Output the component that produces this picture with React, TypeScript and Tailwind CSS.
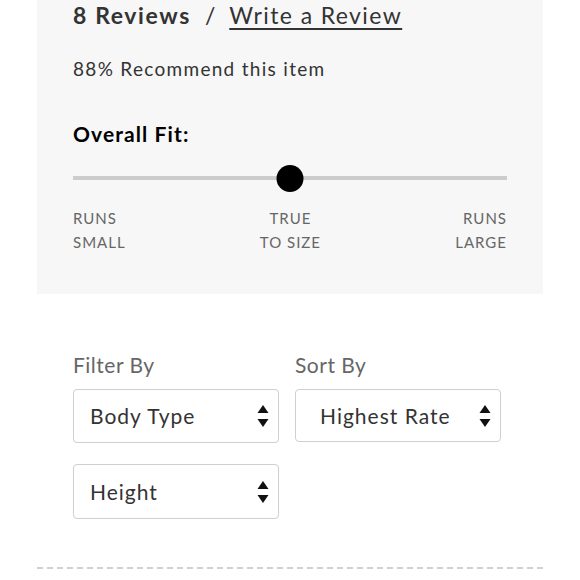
import React from "react";

function Arrows() {
  return (
    <svg width="12" height="24" viewBox="0 0 12 24" className="shrink-0">
      <path d="M6 1 L11.5 9 L0.5 9 Z" fill="#111" />
      <path d="M6 23 L11.5 15 L0.5 15 Z" fill="#111" />
    </svg>
  );
}

function Select({ label, pl, h }: { label: string; pl: string; h: string }) {
  return (
    <div className={`w-[206px] ${h} border border-[#cfcfcf] rounded-[4px] bg-white flex items-center justify-between ${pl} pr-[9px]`}>
      <span className="text-[21px] text-[#333] tracking-[1px]">{label}</span>
      <Arrows />
    </div>
  );
}

export default function App() {
  return (
    <div className="w-[580px] h-[580px] bg-white overflow-hidden font-['Lato',sans-serif]">
      <div className="mx-[37px] bg-[#f7f7f7] h-[294px] px-[36px]">
        <div className="flex items-baseline text-[23px] text-[#333] h-[30px] leading-[30px]">
          <span className="font-bold tracking-[1.6px]">8 Reviews</span>
          <span className="mx-[14px]">/</span>
          <span className="underline underline-offset-[4px] decoration-[1.5px] tracking-[1.4px]">Write a Review</span>
        </div>
        <div className="mt-[26px] text-[19px] text-[#333] leading-[26px] tracking-[1.3px]">88% Recommend this item</div>
        <div className="mt-[39px] text-[21px] font-bold text-black leading-[26px] tracking-[1.1px]">Overall Fit:</div>
        <div className="relative mt-[18px] h-[26px] flex items-center">
          <div className="w-full h-[4px] bg-[#cccccc]" />
          <div className="absolute left-1/2 top-0 -translate-x-1/2 w-[27px] h-[27px] rounded-full bg-black" />
        </div>
        <div className="mt-[15px] flex justify-between text-[15px] text-[#666] leading-[24px] tracking-[1px]">
          <div className="text-left">RUNS<br />SMALL</div>
          <div className="text-center">TRUE<br />TO SIZE</div>
          <div className="text-right">RUNS<br />LARGE</div>
        </div>
      </div>
      <div className="px-[73px] pt-[57px]">
        <div className="flex gap-[16px]">
          <div className="flex flex-col">
            <div className="text-[21px] text-[#666] leading-[28px] tracking-[0.5px]">Filter By</div>
            <div className="mt-[10px]">
              <Select label="Body Type" pl="pl-[16px]" h="h-[54px]" />
            </div>
            <div className="mt-[21px]">
              <Select label="Height" pl="pl-[16px]" h="h-[55px]" />
            </div>
          </div>
          <div className="flex flex-col">
            <div className="text-[21px] text-[#666] leading-[28px] tracking-[0.5px]">Sort By</div>
            <div className="mt-[10px]">
              <Select label="Highest Rate" pl="pl-[24px]" h="h-[53px]" />
            </div>
          </div>
        </div>
      </div>
      <div className="mx-[37px] mt-[48px] border-t-2 border-dashed border-[#d0d0d0]" />
    </div>
  );
}
